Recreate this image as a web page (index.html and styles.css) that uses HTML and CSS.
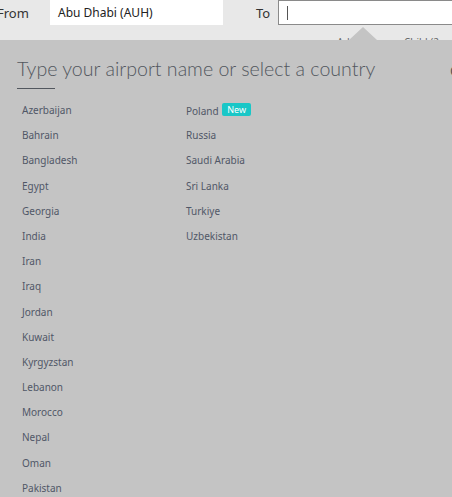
FILE: index.html
```html
<!DOCTYPE html>
<html lang="en">
<head>
  <meta charset="UTF-8" />
  <meta name="viewport" content="width=device-width, initial-scale=1.0"/>
  <title>Book a flight</title>
  <link rel="stylesheet" href="styles.css">
</head>
<body>
  <div class="search-bar">
    <div class="field-row">
      <label class="field-label from-label">From</label>
      <div class="field-input">Abu Dhabi (AUH)</div>
      <label class="field-label to-label">To</label>
      <div class="field-input active"><span class="caret"></span></div>
    </div>
    <div class="pax-row">
      <span class="pax adult">Adult</span>
      <span class="pax child">Child (2-12)</span>
    </div>
  </div>

  <!-- destination picker -->
  <div class="picker">
    <div class="picker-head">
      <h2>Type your airport name or select a country</h2>
      <span class="close">Close</span>
    </div>

    <div class="country-list">
      <ul class="col">
        <li>Azerbaijan</li>
        <li>Bahrain</li>
        <li>Bangladesh</li>
        <li>Egypt</li>
        <li>Georgia</li>
        <li>India</li>
        <li>Iran</li>
        <li>Iraq</li>
        <li>Jordan</li>
        <li>Kuwait</li>
        <li>Kyrgyzstan</li>
        <li>Lebanon</li>
        <li>Morocco</li>
        <li>Nepal</li>
        <li>Oman</li>
        <li>Pakistan</li>
        <li>Philippines</li>
      </ul>
      <ul class="col">
        <li>Poland <span class="badge">New</span></li>
        <li>Russia</li>
        <li>Saudi Arabia</li>
        <li>Sri Lanka</li>
        <li>Turkiye</li>
        <li>Uzbekistan</li>
      </ul>
    </div>
  </div>
</body>
</html>
```

FILE: styles.css
```css
body {
  margin: 0;
  font-family: 'Noto Sans', sans-serif;
  background-color: #c4c4c4;
  overflow: hidden;
}

.search-bar {
  background-color: #e8e8e8;
  height: 40px;
  overflow: hidden;
}

.field-row {
  display: flex;
  align-items: center;
  height: 25px;
}

.field-label {
  font-size: 13px;
  color: #333;
}

.from-label {
  margin-left: -3px;
  width: 53px;
}

.to-label {
  margin-left: 33px;
  width: 22px;
}

.field-input {
  box-sizing: border-box;
  height: 25px;
  width: 173px;
  background: #fff;
  font-size: 12px;
  color: #222;
  padding-left: 8px;
  display: flex;
  align-items: center;
}

.field-input.active {
  flex: 1;
  border: 1px solid #8a8a8a;
  border-right: none;
}

.caret {
  width: 1px;
  height: 14px;
  background: #555;
}

.pax-row {
  display: flex;
  padding-top: 10px;
  font-size: 10px;
  color: #666;
}

.pax.adult {
  margin-left: 337px;
}

.pax.child {
  margin-left: 42px;
}

.picker {
  position: relative;
  background-color: #c4c4c4;
  padding: 0 17px;
}

/* little arrow pointing at the active field */
.picker::before {
  content: '';
  position: absolute;
  top: -13px;
  left: 349px;
  border-left: 14px solid transparent;
  border-right: 14px solid transparent;
  border-bottom: 13px solid #c4c4c4;
}

.picker-head {
  display: flex;
  align-items: baseline;
  padding-top: 16px;
}

.picker-head h2 {
  margin: 0;
  font-family: 'Lato', sans-serif;
  font-weight: 300;
  font-size: 19.6px;
  line-height: 26px;
  color: #52575e;
  padding-bottom: 7px;
  position: relative;
  white-space: nowrap;
}

.picker-head h2::after {
  content: '';
  position: absolute;
  left: 0;
  bottom: 0;
  width: 38px;
  height: 1px;
  background: #52575e;
}

.close {
  flex: none;
  width: 40px;
  margin-left: auto;
  margin-right: -55px;
  font-size: 14px;
  color: #555;
}

.country-list {
  display: flex;
  padding: 14px 0 0 5px;
}

.col {
  list-style: none;
  margin: 0;
  padding: 0;
  width: 164px;
}

.col li {
  height: 25.2px;
  font-size: 10px;
  color: #505767;
}

.badge {
  display: inline-block;
  margin-left: 1px;
  padding: 0 5px;
  background: #19c7c7;
  color: #fff;
  font-size: 9px;
  line-height: 13px;
  border-radius: 2px;
  vertical-align: 2px;
}
```
